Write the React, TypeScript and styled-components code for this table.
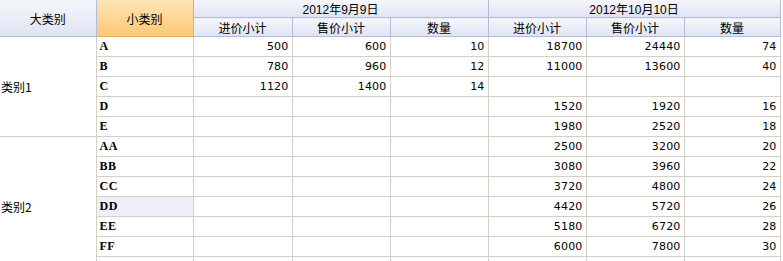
import React from 'react';
import styled, { createGlobalStyle } from 'styled-components';

const GlobalStyle = createGlobalStyle`
  html, body {
    margin: 0;
    padding: 0;
    background: #ffffff;
  }
  body {
    font-family: 'Liberation Sans', 'Noto Sans CJK SC', sans-serif;
    font-size: 12px;
    color: #000;
  }
`;

const Grid = styled.table`
  border-collapse: collapse;
  table-layout: fixed;
  width: 780px;
`;

const HeadCell = styled.th<{ $corner?: boolean; $h?: number }>`
  height: ${(p) => (p.$h ? p.$h - 1 : 16)}px;
  padding: 0;
  font-weight: normal;
  font-size: 12px;
  font-family: 'Liberation Sans', 'Noto Sans CJK SC', sans-serif;
  text-align: center;
  vertical-align: middle;
  border: 1px solid #b3bdd8;
  border-top: none;
  background: ${(p) =>
    p.$corner
      ? 'linear-gradient(#fee4b4, #fbc877)'
      : 'linear-gradient(#f6f7fc, #dfe3f2)'};
  ${(p) => (p.$corner ? 'border-color: #e9ac52;' : '')}
  &:first-child {
    border-left: none;
  }
`;

const GroupCell = styled.td`
  padding: 0 0 0 1px;
  font-family: 'Noto Sans CJK SC', sans-serif;
  font-size: 12px;
  text-align: left;
  vertical-align: middle;
  border-bottom: 1px solid #d4d0c8;
  border-right: 1px solid #d4d0c8;
`;

const Cell = styled.td<{ $num?: boolean; $hl?: boolean }>`
  height: 19px;
  padding: ${(p) => (p.$num ? '0 3px 0 0' : '0 0 0 3px')};
  font-family: ${(p) =>
    p.$num ? "'DejaVu Sans', sans-serif" : "'Liberation Serif', serif"};
  font-size: ${(p) => (p.$num ? '11px' : '12px')};
  font-weight: ${(p) => (p.$num ? 'normal' : 'bold')};
  letter-spacing: ${(p) => (p.$num ? '0.2px' : '0.5px')};
  text-align: ${(p) => (p.$num ? 'right' : 'left')};
  vertical-align: middle;
  white-space: nowrap;
  overflow: hidden;
  background: ${(p) => (p.$hl ? '#efeefb' : 'transparent')};
  border: 1px solid #d4d0c8;
  border-top: none;
`;

type Row = {
  name: string;
  a?: number[];
  b?: number[];
};

const groups: { label: string; rows: Row[] }[] = [
  {
    label: '类别1',
    rows: [
      { name: 'A', a: [500, 600, 10], b: [18700, 24440, 74] },
      { name: 'B', a: [780, 960, 12], b: [11000, 13600, 40] },
      { name: 'C', a: [1120, 1400, 14] },
      { name: 'D', b: [1520, 1920, 16] },
      { name: 'E', b: [1980, 2520, 18] },
    ],
  },
  {
    label: '类别2',
    rows: [
      { name: 'AA', b: [2500, 3200, 20] },
      { name: 'BB', b: [3080, 3960, 22] },
      { name: 'CC', b: [3720, 4800, 24] },
      { name: 'DD', b: [4420, 5720, 26] },
      { name: 'EE', b: [5180, 6720, 28] },
      { name: 'FF', b: [6000, 7800, 30] },
      // last row runs below the visible area
      { name: '' },
    ],
  },
];

const widths = [96, 97, 99, 98, 98, 98, 98, 96];
const subHeads = ['进价小计', '售价小计', '数量'];

const values = (v?: number[]) => [0, 1, 2].map((i) => (v ? v[i] : null));

const App = () => {
  return (
    <>
      <GlobalStyle />
      <Grid>
        <colgroup>
          {widths.map((w, i) => (
            <col key={i} style={{ width: w }} />
          ))}
        </colgroup>
        <thead>
          <tr>
            <HeadCell rowSpan={2}>大类别</HeadCell>
            <HeadCell rowSpan={2} $corner>
              小类别
            </HeadCell>
            <HeadCell colSpan={3}>2012年9月9日</HeadCell>
            <HeadCell colSpan={3}>2012年10月10日</HeadCell>
          </tr>
          <tr>
            {[...subHeads, ...subHeads].map((t, i) => (
              <HeadCell key={i} $h={19}>
                {t}
              </HeadCell>
            ))}
          </tr>
        </thead>
        <tbody>
          {groups.map((g) =>
            g.rows.map((r, i) => (
              <tr key={g.label + i}>
                {i === 0 && <GroupCell rowSpan={g.rows.length}>{g.label}</GroupCell>}
                <Cell $hl={r.name === 'DD'}>{r.name}</Cell>
                {[...values(r.a), ...values(r.b)].map((v, j) => (
                  <Cell key={j} $num>
                    {v ?? ''}
                  </Cell>
                ))}
              </tr>
            ))
          )}
        </tbody>
      </Grid>
    </>
  );
};

export default App;
